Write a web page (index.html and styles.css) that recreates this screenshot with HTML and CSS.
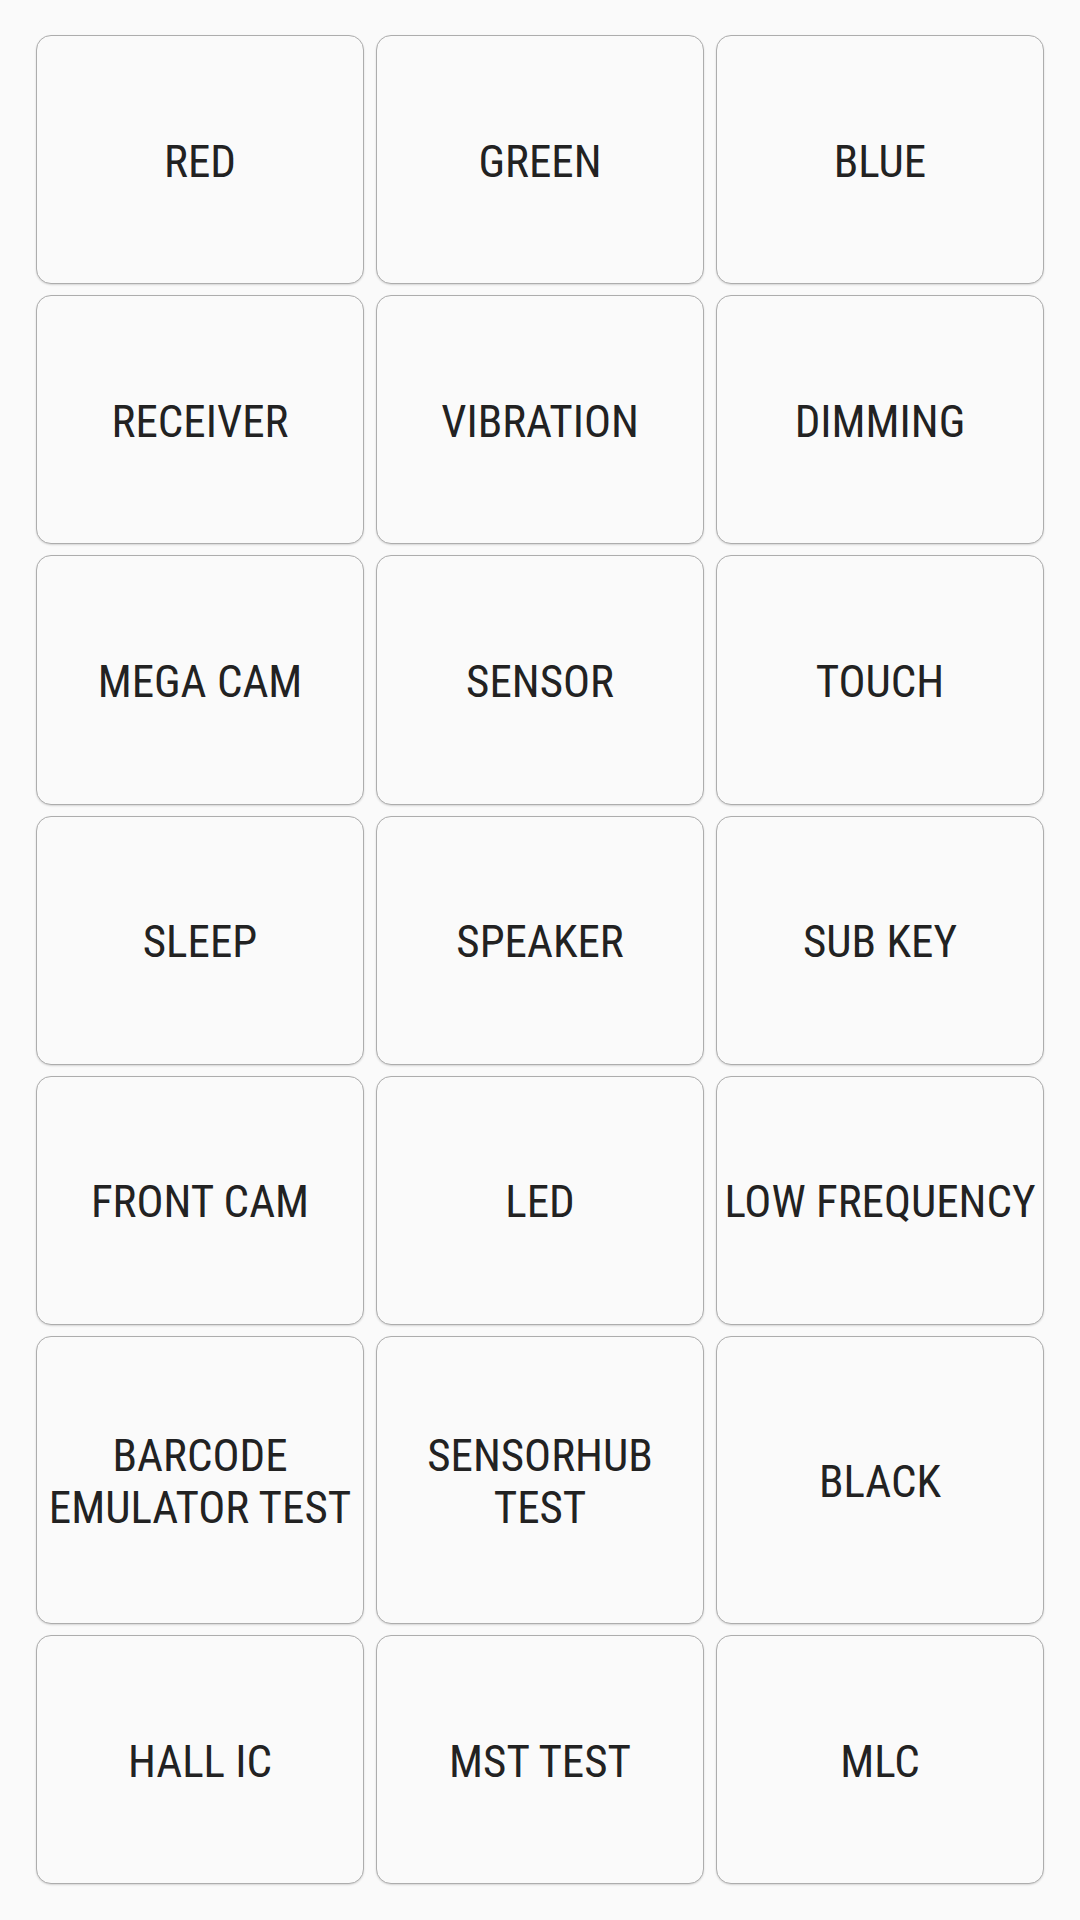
FILE: index.html
```html
<!DOCTYPE html>
<html lang="en">
<head>
    <meta charset="UTF-8">
    <meta name="viewport" content="width=device-width, initial-scale=1.0">
    <title>Test Menu</title>
    <link rel="stylesheet" href="styles.css">
</head>
<body>
    <div class="grid">
        <button class="item">RED</button>
        <button class="item">GREEN</button>
        <button class="item">BLUE</button>
        <button class="item">RECEIVER</button>
        <button class="item">VIBRATION</button>
        <button class="item">DIMMING</button>
        <button class="item">MEGA CAM</button>
        <button class="item">SENSOR</button>
        <button class="item">TOUCH</button>
        <button class="item">SLEEP</button>
        <button class="item">SPEAKER</button>
        <button class="item">SUB KEY</button>
        <button class="item">FRONT CAM</button>
        <button class="item">LED</button>
        <button class="item">LOW FREQUENCY</button>
        <button class="item">BARCODE<br>EMULATOR TEST</button>
        <button class="item">SENSORHUB<br>TEST</button>
        <button class="item">BLACK</button>
        <button class="item">HALL IC</button>
        <button class="item">MST TEST</button>
        <button class="item">MLC</button>
    </div>
</body>
</html>
```

FILE: styles.css
```css
body { margin: 0; background: #fafafa; font-family: "Roboto Condensed", Roboto, sans-serif; }
.grid {
    display: grid;
    grid-template-columns: repeat(3, 328px);
    grid-auto-rows: minmax(249.2px, auto);
    gap: 11px 12px;
    padding: 35px 36px;
}
.item {
    box-sizing: border-box;
    min-height: 249px;
    padding: 93px 2px 89px;
    background: #fafafa;
    border: 1px solid #adadad;
    border-radius: 15px;
    box-shadow: 0 1px 2px rgba(0, 0, 0, 0.15);
    font-family: inherit;
    font-size: 45px;
    line-height: 52px;
    color: #222;
    text-align: center;
}
```
